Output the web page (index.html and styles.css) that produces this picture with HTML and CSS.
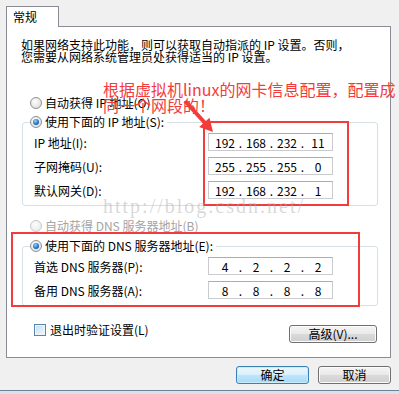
FILE: index.html
```html
<!DOCTYPE html>
<html lang="zh-CN">
<head>
    <meta charset="UTF-8">
    <title>Internet 协议版本 4 (TCP/IPv4) 属性</title>
    <link rel="stylesheet" href="styles.css">
</head>
<body>
    <div class="dialog">
        <div class="tabs">
            <div class="tab">常规</div>
        </div>
        <div class="panel">
            <p class="intro">如果网络支持此功能，则可以获取自动指派的 IP 设置。否则，<br>您需要从网络系统管理员处获得适当的 IP 设置。</p>

            <label class="choice first"><span class="radio"></span>自动获得 IP 地址(O)</label>
            <fieldset class="group">
                <legend><label class="choice"><span class="radio on"></span>使用下面的 IP 地址(S):</label></legend>
                <div class="fields">
                    <div class="field"><span>IP 地址(I):</span>
                        <div class="ip"><span>192</span><i>.</i><span>168</span><i>.</i><span>232</span><i>.</i><span>11</span></div>
                    </div>
                    <div class="field"><span>子网掩码(U):</span>
                        <div class="ip"><span>255</span><i>.</i><span>255</span><i>.</i><span>255</span><i>.</i><span>0</span></div>
                    </div>
                    <div class="field"><span>默认网关(D):</span>
                        <div class="ip"><span>192</span><i>.</i><span>168</span><i>.</i><span>232</span><i>.</i><span>1</span></div>
                    </div>
                </div>
            </fieldset>

            <label class="choice off"><span class="radio"></span>自动获得 DNS 服务器地址(B)</label>
            <fieldset class="group">
                <legend><label class="choice"><span class="radio on"></span>使用下面的 DNS 服务器地址(E):</label></legend>
                <div class="fields">
                    <div class="field"><span>首选 DNS 服务器(P):</span>
                        <div class="ip"><span>4</span><i>.</i><span>2</span><i>.</i><span>2</span><i>.</i><span>2</span></div>
                    </div>
                    <div class="field"><span>备用 DNS 服务器(A):</span>
                        <div class="ip"><span>8</span><i>.</i><span>8</span><i>.</i><span>8</span><i>.</i><span>8</span></div>
                    </div>
                </div>
            </fieldset>

            <div class="options">
                <label class="check"><span class="box"></span>退出时验证设置(L)</label>
                <button class="btn advanced">高级(V)...</button>
            </div>
        </div>
        <div class="actions">
            <button class="btn default">确定</button>
            <button class="btn">取消</button>
        </div>
        <div class="frame-bottom"></div>
    </div>

    <!-- annotations drawn over the screenshot -->
    <div class="note">根据虚拟机linux的网卡信息配置，配置成<br>同一个网段的！</div>
    <svg class="arrow" width="50" height="45" viewBox="0 0 50 45">
        <line x1="15" y1="9" x2="35" y2="31" stroke="#f43b3b" stroke-width="4"/>
        <polygon points="43,40 39.5,25.7 29.1,35.1" fill="#f43b3b"/>
    </svg>
    <div class="mark mark-ip"></div>
    <div class="mark mark-dns"></div>
    <div class="watermark">http://blog.csdn.net/</div>
</body>
</html>
```

FILE: styles.css
```css
body {
    margin: 0;
    width: 399px;
    height: 394px;
    overflow: hidden;
    background: #f0f0f0;
    font-family: "Noto Sans CJK SC", "Liberation Sans", sans-serif;
    font-size: 12px;
    color: #000;
}
.dialog {
    padding: 6px 8px 0 6px;
}
.tabs {
    height: 20px;
}
.tab {
    position: relative;
    z-index: 1;
    width: 53px;
    height: 21px;
    box-sizing: border-box;
    border: 1px solid #898c95;
    border-bottom: none;
    background: #fff;
    padding-left: 6px;
    line-height: 19px;
}
.panel {
    height: 332px;
    box-sizing: border-box;
    border: 1px solid #898c95;
    background: #fff;
    padding-top: 12px;
}
.intro {
    margin: 0 0 0 14px;
    line-height: 12px;
    white-space: nowrap;
}
.choice {
    display: flex;
    align-items: center;
    height: 14px;
    line-height: 14px;
    white-space: nowrap;
}
.choice.first {
    margin: 33px 0 0 23px;
}
.choice.off {
    margin: 13px 0 0 23px;
    color: #a3a3a3;
}
.radio {
    position: relative;
    width: 12px;
    height: 12px;
    box-sizing: border-box;
    margin-right: 3px;
    border: 1px solid #8f9193;
    border-radius: 50%;
    background: radial-gradient(circle at 40% 35%, #fdfdfd, #d7d7d7);
}
.choice.off .radio {
    border-color: #c7c9cb;
    background: radial-gradient(circle at 40% 35%, #fdfdfd, #e6e6e6);
}
.radio.on::after {
    content: "";
    position: absolute;
    left: 2px;
    top: 2px;
    width: 6px;
    height: 6px;
    border-radius: 50%;
    background: radial-gradient(circle at 40% 35%, #8fd2ff, #1a6fc0 60%, #0b3f7a);
}
.group {
    margin: 5px 12px 0 15px;
    padding: 0 0 6px 0;
    border: 1px solid #d5dfe5;
    border-radius: 3px;
    min-width: 0;
}
.group legend {
    margin-left: 7px;
    padding: 0 3px 0 0;
}
.choice.off + .group {
    margin-top: 6px;
}
.fields {
    display: grid;
    gap: 6px;
    padding: 4px 0 0 11px;
}
.field {
    display: grid;
    grid-template-columns: 174px 125px;
    align-items: center;
    white-space: nowrap;
}
.ip {
    display: flex;
    align-items: center;
    height: 18px;
    box-sizing: border-box;
    padding-left: 4px;
    border: 1px solid #c9cbcf;
    border-top-color: #abadb3;
    background: #fff;
}
.ip span {
    width: 24px;
    text-align: center;
}
.ip i {
    width: 7px;
    font-style: normal;
    text-align: center;
}
.options {
    display: flex;
    justify-content: space-between;
    align-items: flex-start;
    margin: 18px 13px 0 27px;
}
.check {
    display: flex;
    align-items: center;
    line-height: 12px;
    white-space: nowrap;
}
.box {
    width: 12px;
    height: 12px;
    box-sizing: border-box;
    margin-right: 4px;
    border: 1px solid #5b86ab;
    box-shadow: inset 0 0 0 1px #eef6fc;
    background: linear-gradient(135deg, #c4ddf3, #f1f8fe);
}
.btn {
    height: 18px;
    box-sizing: border-box;
    padding: 0;
    border: 1px solid #707070;
    border-radius: 3px;
    background: linear-gradient(#f4f4f4, #e9e9e9 50%, #dadada 51%, #cfcfcf);
    box-shadow: inset 0 0 0 1px #fbfbfb;
    font-family: inherit;
    font-size: 12px;
    line-height: 16px;
    color: #000;
}
.advanced {
    width: 88px;
    margin-top: 1px;
}
.actions {
    display: flex;
    justify-content: flex-end;
    gap: 9px;
    margin-top: 8px;
}
.actions .btn {
    width: 73px;
}
.btn.default {
    border-color: #3c7fb1;
    background: linear-gradient(#eaf6fd, #d9f0fc 50%, #bee6fd 51%, #a7d9f5);
    box-shadow: inset 0 0 0 1px #c8ecfb;
}
.frame-bottom {
    margin: 6px -8px 0 -6px;
    height: 3px;
    border-top: 1px solid #6d8094;
    background: #d9e1e9;
}
.note {
    position: absolute;
    left: 103px;
    top: 81px;
    font-size: 16px;
    line-height: 16px;
    color: #f43b3b;
    white-space: nowrap;
}
.arrow {
    position: absolute;
    left: 170px;
    top: 92px;
}
.mark {
    position: absolute;
    border: 2px solid #f23c3c;
    box-sizing: border-box;
}
.mark-ip {
    left: 203px;
    top: 121px;
    width: 146px;
    height: 85px;
}
.mark-dns {
    left: 11px;
    top: 232px;
    width: 349px;
    height: 75px;
}
.watermark {
    position: absolute;
    left: 103px;
    top: 195px;
    font-family: "Liberation Serif", serif;
    font-size: 20px;
    letter-spacing: 2px;
    color: rgba(170, 170, 170, 0.45);
    white-space: nowrap;
}
```
